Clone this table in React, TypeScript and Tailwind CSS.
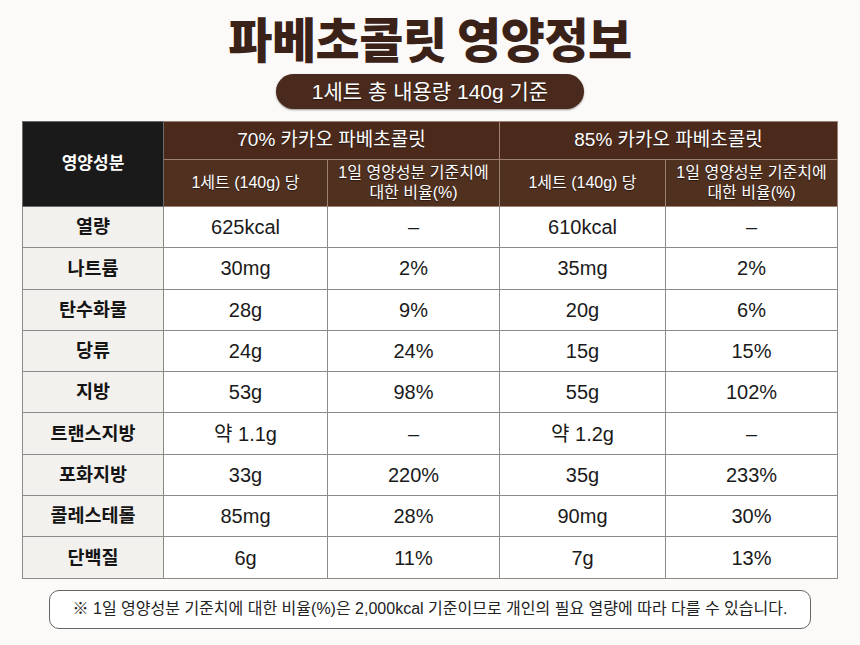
import React from "react";

const rows: [string, string, string, string, string][] = [
  ["열량", "625kcal", "–", "610kcal", "–"],
  ["나트륨", "30mg", "2%", "35mg", "2%"],
  ["탄수화물", "28g", "9%", "20g", "6%"],
  ["당류", "24g", "24%", "15g", "15%"],
  ["지방", "53g", "98%", "55g", "102%"],
  ["트랜스지방", "약 1.1g", "–", "약 1.2g", "–"],
  ["포화지방", "33g", "220%", "35g", "233%"],
  ["콜레스테롤", "85mg", "28%", "90mg", "30%"],
  ["단백질", "6g", "11%", "7g", "13%"],
];

const hdr =
  "text-white font-normal border border-[#9c8272] [text-shadow:0_1px_1px_rgba(0,0,0,0.5)]";

export default function App() {
  const font = {
    fontFamily: '"Liberation Sans", "Noto Sans CJK KR", sans-serif',
  };
  const kr = { fontFamily: '"Noto Sans CJK KR", sans-serif' };
  return (
    <div
      className="w-[860px] h-[645px] bg-[#fbfaf8] flex flex-col items-center overflow-hidden"
      style={font}
    >
      <h1
        className="mt-[9px] text-[48px] leading-[56px] font-black text-[#3b2219] tracking-[-0.5px]"
        style={kr}
      >
        파베초콜릿 영양정보
      </h1>
      <div className="mt-[9px] w-[308px] h-[35px] rounded-full bg-[#4a2a1d] flex items-center justify-center text-white text-[21px] font-normal shadow-[0_1px_2px_rgba(0,0,0,0.4)] [text-shadow:0_1px_1px_rgba(0,0,0,0.5)]">
        1세트 총 내용량 140g 기준
      </div>
      <table className="mt-[12px] w-[815px] border-collapse table-fixed">
        <colgroup>
          <col className="w-[141px]" />
          <col className="w-[164px]" />
          <col className="w-[172px]" />
          <col className="w-[166px]" />
          <col className="w-[172px]" />
        </colgroup>
        <thead>
          <tr className="h-[38px]">
            <th
              rowSpan={2}
              className="bg-[#1b1a1a] text-white text-[17px] font-bold border border-[#6b6b6b]"
            >
              영양성분
            </th>
            <th colSpan={2} className={`bg-[#4b2a1c] text-[19px] ${hdr}`}>
              70% 카카오 파베초콜릿
            </th>
            <th colSpan={2} className={`bg-[#4b2a1c] text-[19px] ${hdr}`}>
              85% 카카오 파베초콜릿
            </th>
          </tr>
          <tr className="h-[47px]">
            <th className={`bg-[#50301f] text-[16px] ${hdr}`}>1세트 (140g) 당</th>
            <th className={`bg-[#50301f] text-[16px] leading-[20px] ${hdr}`}>
              1일 영양성분 기준치에
              <br />
              대한 비율(%)
            </th>
            <th className={`bg-[#50301f] text-[16px] ${hdr}`}>1세트 (140g) 당</th>
            <th className={`bg-[#50301f] text-[16px] leading-[20px] ${hdr}`}>
              1일 영양성분 기준치에
              <br />
              대한 비율(%)
            </th>
          </tr>
        </thead>
        <tbody>
          {rows.map((r) => (
            <tr key={r[0]} className="h-[41.3px]">
              <td className="bg-[#f3f1ee] text-center text-[18.5px] font-bold text-[#151515] border border-[#8a8a8a]">
                {r[0]}
              </td>
              {r.slice(1).map((v, i) => (
                <td
                  key={i}
                  className="bg-white text-center text-[20px] text-[#1a1a1a] border border-[#8a8a8a]"
                >
                  {v}
                </td>
              ))}
            </tr>
          ))}
        </tbody>
      </table>
      <div className="mt-[11px] w-[762px] h-[39px] rounded-[10px] border border-[#666] bg-white flex items-center justify-center text-[16px] text-[#222]">
        ※ 1일 영양성분 기준치에 대한 비율(%)은 2,000kcal 기준이므로 개인의 필요 열량에 따라 다를 수 있습니다.
      </div>
    </div>
  );
}
